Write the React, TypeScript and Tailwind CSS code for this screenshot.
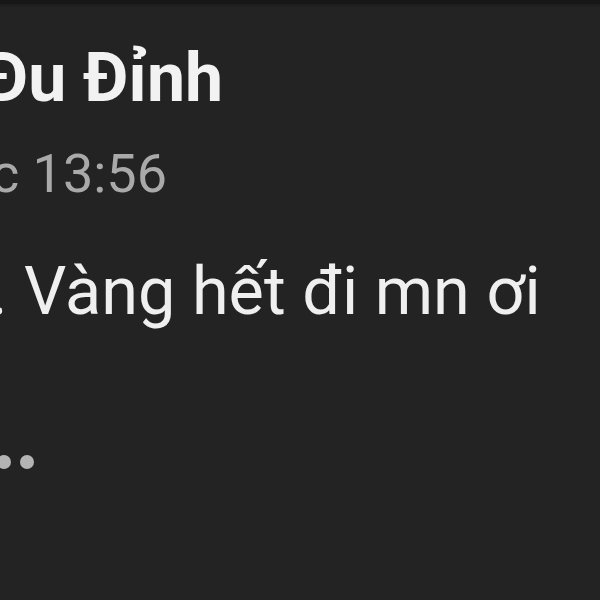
export default function App() {
  return (
    <div className="w-[600px] h-[600px] overflow-hidden bg-[#232323] relative" style={{ fontFamily: 'Roboto, "Noto Sans", sans-serif' }}>
      <div className="h-[4px] bg-[#171717]" />
      <div className="h-[3px] bg-gradient-to-b from-[#1c1c1c] to-[#232323]" />
      <div className="flex flex-col">
        <div className="mt-[31px] h-[80px] leading-[80px] text-[68px] font-bold text-[#f2f2f2] whitespace-nowrap ml-[-17px]">
          Đu Đỉnh
        </div>
        <div className="mt-[26px] h-[60px] leading-[60px] text-[54px] text-[#a9a9a9] whitespace-nowrap ml-[-52px]">
          lúc 13:56
        </div>
        <div className="mt-[47px] h-[80px] leading-[80px] text-[66.6px] text-[#efefef] whitespace-nowrap ml-[-10px]">
          . Vàng hết đi mn ơi
        </div>
        <div className="mt-[124px] flex gap-[9px] ml-[-26px]">
          <span className="w-[14px] h-[14px] rounded-full bg-[#b4b4b4]" />
          <span className="w-[14px] h-[14px] rounded-full bg-[#b4b4b4]" />
          <span className="w-[14px] h-[14px] rounded-full bg-[#b4b4b4]" />
        </div>
      </div>
    </div>
  );
}
